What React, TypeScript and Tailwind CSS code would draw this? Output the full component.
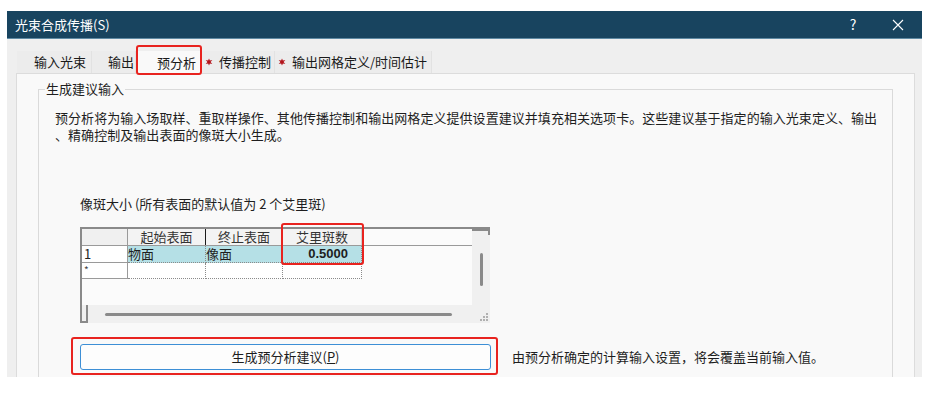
import React from 'react';

const FONT = { fontFamily: '"Noto Sans CJK SC", "Noto Sans", sans-serif' };

const Star = () => (
    <svg width="8" height="8" viewBox="0 0 8 8" className="shrink-0">
        <path d="M4 0.5 L4.9 2.6 L7.3 2.1 L5.6 4 L7.3 5.9 L4.9 5.4 L4 7.5 L3.1 5.4 L0.7 5.9 L2.4 4 L0.7 2.1 L3.1 2.6 Z" fill="#b3141b" />
    </svg>
);

const tabs = [
    { label: '输入光束', cls: 'w-[75px] pl-[17px]', star: false },
    { label: '输出', cls: 'w-[44px] pl-[16px]', star: false },
    { label: '预分析', cls: 'w-[66px] pl-[21px]', star: false, active: true },
    { label: '传播控制', cls: 'w-[73px] pl-[3px]', star: true },
    { label: '输出网格定义/时间估计', cls: 'w-[157px] pl-[3px]', star: true },
];

function TitleBar() {
    return (
        <div className="h-[28px] bg-[#18445f] border-b border-[#5f8aa3] flex items-center text-white text-[13px]">
            <span className="pl-[8px] flex-1">光束合成传播(S)</span>
            <span className="w-[20px] text-center mr-[29px] text-[14px]">?</span>
            <svg width="12" height="12" viewBox="0 0 12 12" className="mr-[18px]">
                <path d="M1 1 L11 11 M11 1 L1 11" stroke="#ffffff" strokeWidth="1.1" />
            </svg>
        </div>
    );
}

function Tabs() {
    return (
        <div className="flex h-[22px] ml-[10px] mt-[12px] text-[13px] text-[#1a1a1a]">
            {tabs.map((t) => (
                <div
                    key={t.label}
                    className={
                        t.active
                            ? `${t.cls} relative bg-[#f9f9f9] flex items-center -mb-px z-10`
                            : `${t.cls} bg-[#ececec] border-r border-[#e2e2e2] flex items-center gap-[6px]`
                    }
                >
                    {t.star && <Star />}
                    <span>{t.label}</span>
                    {t.active && (
                        <span className="absolute left-0 right-0 top-[-6px] bottom-[-1px] border-2 border-[#e8231f] rounded-[3px]" />
                    )}
                </div>
            ))}
        </div>
    );
}

function DataTable() {
    const cols = ['w-[78px]', 'w-[77px]', 'w-[79px]'];
    return (
        <div className="relative w-[410px] h-[96px] bg-[#fbfbfb] border-t-2 border-l-2 border-[#8a8a8a] flex text-[13px] leading-[16px]">
            <div className="flex-1 flex flex-col">
                <div className="flex-1">
                    {/* header */}
                    <div className="flex h-[17px] border-b border-[#9a9a9a]">
                        <div className="w-[46px] bg-[#f0f0f0] border-r border-[#9a9a9a]" />
                        {['起始表面', '终止表面', '艾里斑数'].map((h, i) => (
                            <div key={h} className={`${cols[i]} bg-[#f3f3f3] border-r ${i < 2 ? 'border-[#1a1a1a]' : 'border-[#cfcfcf]'} text-center text-[#333]`}>
                                {h}
                            </div>
                        ))}
                    </div>
                    {/* row 1 */}
                    <div className="flex h-[17px]">
                        <div className="w-[46px] bg-white border-r border-b border-[#9a9a9a] pl-[2px] text-[#222]">1</div>
                        <div className={`${cols[0]} bg-[#b5e0e6] border-r border-b border-dotted border-[#8a8a8a]`}>物面</div>
                        <div className={`${cols[1]} bg-[#b5e0e6] border-r border-b border-dotted border-[#8a8a8a]`}>像面</div>
                        <div className={`${cols[2]} bg-[#b5e0e6] border-r border-b border-dotted border-[#8a8a8a] text-right pr-[13px] font-bold`} style={{ fontFamily: '"Liberation Sans", "Noto Sans CJK SC", sans-serif' }}>
                            0.5000
                        </div>
                    </div>
                    {/* new row */}
                    <div className="flex h-[16px]">
                        <div className="w-[46px] h-[16px] bg-white border-r border-b border-[#9a9a9a] pl-[2px] pt-[1px] text-[10px] leading-[11px] text-[#444]">*</div>
                        {cols.map((c, i) => (
                            <div key={i} className={`${c} bg-white border-r border-b border-dotted border-[#8a8a8a]`} />
                        ))}
                    </div>
                </div>
                {/* horizontal scroll */}
                <div className="h-[18px] bg-[#f0f0f0] flex items-center">
                    <div className="w-[6px] h-full border-r-2 border-b-2 border-[#8a8a8a]" />
                    <div className="ml-[17px] w-[347px] h-[3px] bg-[#8a8a8a] rounded-full" />
                </div>
            </div>
            {/* vertical scroll */}
            <div className="w-[18px] bg-[#f0f0f0] flex flex-col items-center">
                <div className="w-full h-[6px] border-t-2 border-r-2 border-[#8a8a8a]" />
                <div className="mt-[18px] w-[3px] h-[33px] bg-[#8a8a8a] rounded-full" />
                <div className="flex-1" />
                <div className="mb-[2px] self-end mr-[2px] grid grid-cols-3 gap-[1px]">
                    {[0, 0, 1, 0, 1, 1, 1, 1, 1].map((v, i) => (
                        <span key={i} className={`w-[2px] h-[2px] ${v ? 'bg-[#b0b0b0]' : 'bg-transparent'}`} />
                    ))}
                </div>
            </div>
            {/* highlight around 艾里斑数 column */}
            <span className="absolute left-[199px] top-[-6px] w-[83px] h-[42px] border-2 border-[#e8231f] rounded-[3px]" />
        </div>
    );
}

export default function App() {
    return (
        <div className="w-[931px] h-[393px] bg-white pt-[11px] pl-[7px] overflow-hidden" style={FONT}>
            <div className="w-[915px] h-[366px] bg-[#efefef] flex flex-col">
                <TitleBar />
                <Tabs />
                <div className="flex-1 ml-[9px] mr-[7px] bg-[#f9f9f9] border-t border-x border-[#dcdcdc] pt-[15px] px-[21px]">
                    <div className="relative h-full border-t border-x border-[#dadada] pl-[16px] pr-[10px] text-[13px] text-[#1e1e1e]">
                        <span className="absolute left-[6px] top-[-10px] bg-[#f9f9f9] px-[1px] text-[13px] leading-[18px]">生成建议输入</span>
                        <p className="pt-[19px] leading-[17px] tracking-[0.05px] whitespace-nowrap">
                            预分析将为输入场取样、重取样操作、其他传播控制和输出网格定义提供设置建议并填充相关选项卡。这些建议基于指定的输入光束定义、输出
                            <br />
                            、精确控制及输出表面的像斑大小生成。
                        </p>
                        <div className="pl-[25px] mt-[52px] leading-[17px]">像斑大小 (所有表面的默认值为 2 个艾里斑)</div>
                        <div className="pl-[25px] mt-[15px]">
                            <DataTable />
                        </div>
                        <div className="flex items-center mt-[21px] pl-[25px]">
                            <div className="relative">
                                <button className="w-[411px] h-[26px] bg-[#fdfdfd] border border-[#3d8fd6] rounded-[3px] text-[13px] text-[#1e1e1e]">
                                    生成预分析建议(<span className="underline">P</span>)
                                </button>
                                <span className="absolute left-[-9px] right-[-7px] top-[-7px] bottom-[-5px] border-2 border-[#e8231f] rounded-[3px]" />
                            </div>
                            <span className="ml-[21px]">由预分析确定的计算输入设置，将会覆盖当前输入值。</span>
                        </div>
                    </div>
                </div>
            </div>
        </div>
    );
}
